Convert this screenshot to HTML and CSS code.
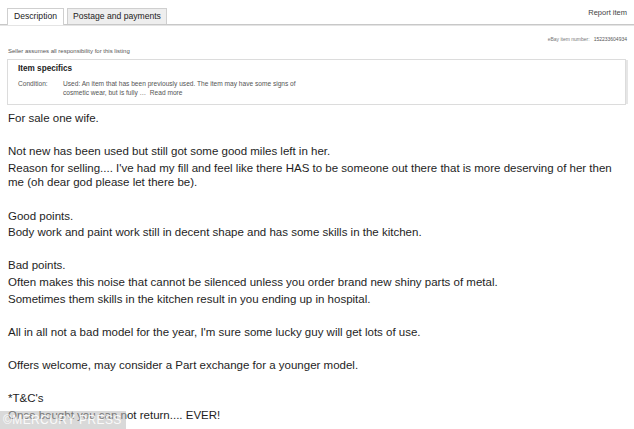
FILE: index.html
```html
<!DOCTYPE html>
<html>
<head>
<meta charset="utf-8">
<link rel="stylesheet" href="styles.css">
</head>
<body>
<div class="page">
  <div class="tabbar">
    <div class="tabs">
      <div class="tab active">Description</div>
      <div class="tab">Postage and payments</div>
    </div>
    <div class="report">Report item</div>
  </div>
  <div class="itemno"><span class="lbl">eBay item number:</span><span class="num">152233604934</span></div>
  <div class="seller">Seller assumes all responsibility for this listing</div>
  <div class="specs">
    <div class="specs-title">Item specifics</div>
    <div class="spec-row">
      <div class="spec-key">Condition:</div>
      <div class="spec-val">Used: An item that has been previously used. The item may have some signs of cosmetic wear, but is fully &hellip;&nbsp; Read more</div>
    </div>
  </div>
  <div class="desc">
    <p>For sale one wife.</p>
    <p class="blank"></p>
    <p>Not new has been used but still got some good miles left in her.</p>
    <p>Reason for selling.... I've had my fill and feel like there HAS to be someone out there that is more deserving of her then me (oh dear god please let there be).</p>
    <p class="blank"></p>
    <p>Good points.</p>
    <p>Body work and paint work still in decent shape and has some skills in the kitchen.</p>
    <p class="blank"></p>
    <p>Bad points.</p>
    <p>Often makes this noise that cannot be silenced unless you order brand new shiny parts of metal.</p>
    <p>Sometimes them skills in the kitchen result in you ending up in hospital.</p>
    <p class="blank"></p>
    <p>All in all not a bad model for the year, I'm sure some lucky guy will get lots of use.</p>
    <p class="blank"></p>
    <p>Offers welcome, may consider a Part exchange for a younger model.</p>
    <p class="blank"></p>
    <p>*T&amp;C's</p>
    <p>Once bought you can not return.... EVER!</p>
  </div>
  <div class="watermark">©MERCURY PRESS</div>
</div>
</body>
</html>
```

FILE: styles.css
```css
html, body {
  margin: 0;
  padding: 0;
  background: #fff;
}
body {
  font-family: "Liberation Sans", Arial, sans-serif;
  color: #222;
  overflow: hidden;
}
.page {
  position: relative;
  width: 634px;
  height: 429px;
  overflow: hidden;
}
.tabbar {
  display: flex;
  justify-content: space-between;
  align-items: flex-start;
  border-bottom: 1px solid #c8c8c8;
  box-shadow: 0 1px 0 #e4e4e4;
  padding: 8px 7px 0 7px;
  height: 16px;
}
.tabs {
  display: flex;
  gap: 3px;
}
.tab {
  font-size: 8.6px;
  line-height: 15px;
  height: 15px;
  padding: 0 5px;
  border: 1px solid #cfcfcf;
  border-bottom: none;
  background: #eeeeee;
  color: #222;
}
.tab.active {
  background: #fff;
  height: 16px;
  margin-bottom: -1px;
  position: relative;
  padding: 0 6px;
}
.report {
  font-size: 7.5px;
  color: #444;
  line-height: 10px;
}
.itemno {
  display: flex;
  justify-content: flex-end;
  gap: 4px;
  font-size: 5px;
  color: #777;
  padding: 11px 7px 0 0;
  line-height: 6px;
}
.itemno .num {
  color: #555;
}
.seller {
  font-size: 6px;
  color: #555;
  padding: 5px 0 0 8px;
  line-height: 8px;
}
.specs {
  margin: 4px 8px 0 7px;
  border: 1px solid #dcdcdc;
  box-shadow: 3px 0 0 -1px #e6e6e6;
  padding: 4px 10px 7px 10px;
  height: 33px;
}
.specs-title {
  font-size: 8.2px;
  font-weight: bold;
  color: #222;
  line-height: 10px;
}
.spec-row {
  display: flex;
  margin-top: 5px;
  font-size: 6.6px;
  color: #555;
  line-height: 9px;
}
.spec-key {
  width: 45px;
  flex: none;
}
.spec-val {
  width: 246px;
}
.desc {
  padding: 6px 8px 0 8px;
  width: 612px;
}
.desc p {
  margin: 0 0 2px 0;
  font-size: 11.5px;
  line-height: 14.6px;
  min-height: 14.6px;
  color: #1e1e1e;
}
.watermark {
  position: absolute;
  left: 0;
  bottom: 0;
  width: 126px;
  height: 18px;
  background: rgba(185, 185, 185, 0.55);
  color: rgba(255, 255, 255, 0.9);
  font-size: 12px;
  line-height: 18px;
  padding-left: 3px;
  letter-spacing: 0.4px;
  box-sizing: border-box;
}
```
